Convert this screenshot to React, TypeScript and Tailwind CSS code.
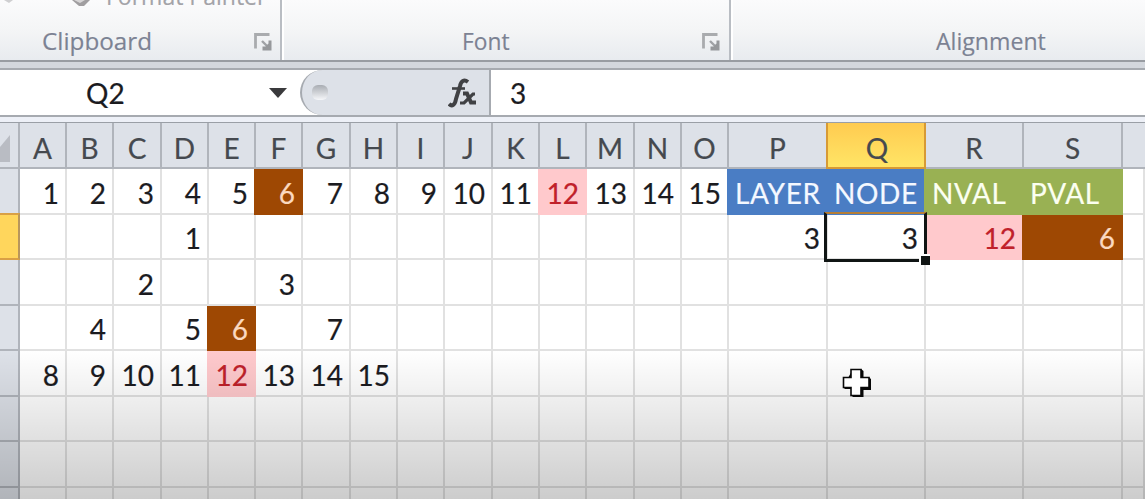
import React from 'react';
import { clsx } from 'clsx';

type Tone = 'brown' | 'pink' | 'blue' | 'green';

interface CellData {
  value: string;
  tone?: Tone;
}

const columns = 'ABCDEFGHIJKLMNOPQRS'.split('');

const gridCols =
  'grid grid-cols-[20px_47px_47px_48px_47px_47px_47px_48px_47px_47px_48px_47px_47px_48px_47px_47px_99px_98px_98px_99px_22px]';

const rowHeights = ['h-[46px]', 'h-[45px]', 'h-[46px]', 'h-[45px]', 'h-[46px]', 'h-[45px]', 'h-[46px]', 'h-[46px]'];

const tones: Record<Tone, string> = {
  brown: 'bg-[#9e4803] text-[#fbd9c0] border-[#9e4803]',
  pink: 'bg-[#ffc9cc] text-[#c0212a] border-[#ffc9cc]',
  blue: 'bg-[#4a7dc4] text-[#f4f8ff] border-[#4a7dc4]',
  green: 'bg-[#99b153] text-[#fbfff0] border-[#99b153]',
};

const rows: Record<string, CellData>[] = [
  {
    A: { value: '1' }, B: { value: '2' }, C: { value: '3' }, D: { value: '4' }, E: { value: '5' },
    F: { value: '6', tone: 'brown' }, G: { value: '7' }, H: { value: '8' }, I: { value: '9' },
    J: { value: '10' }, K: { value: '11' }, L: { value: '12', tone: 'pink' }, M: { value: '13' },
    N: { value: '14' }, O: { value: '15' },
    P: { value: 'LAYER', tone: 'blue' }, Q: { value: 'NODE', tone: 'blue' },
    R: { value: 'NVAL', tone: 'green' }, S: { value: 'PVAL', tone: 'green' },
  },
  {
    D: { value: '1' }, P: { value: '3' }, Q: { value: '3' },
    R: { value: '12', tone: 'pink' }, S: { value: '6', tone: 'brown' },
  },
  { C: { value: '2' }, F: { value: '3' } },
  { B: { value: '4' }, D: { value: '5' }, E: { value: '6', tone: 'brown' }, G: { value: '7' } },
  {
    A: { value: '8' }, B: { value: '9' }, C: { value: '10' }, D: { value: '11' },
    E: { value: '12', tone: 'pink' }, F: { value: '13' }, G: { value: '14' }, H: { value: '15' },
  },
  {},
  {},
  {},
];

const LauncherIcon = () => (
  <svg width="18" height="18" viewBox="0 0 18 18" fill="none" className="shrink-0">
    <path d="M1.5 15.5V1.5H15.5" stroke="#a9abae" strokeWidth="2.8" />
    <path d="M8 8l5 5" stroke="#a0a2a5" strokeWidth="2.4" />
    <path d="M17.5 7.5v10H8.500v-4h3l3-3v-3z" fill="#96989b" />
  </svg>
);

const Ribbon = () => (
  <div className="flex h-[60px] overflow-hidden bg-linear-to-b from-[#fbfbfc] via-[#f4f5f6] to-[#e8ebef] font-['Open_Sans',sans-serif] text-[23px] text-[#7c8293] [-webkit-text-stroke:0.15px_currentColor]">
    <div className="relative w-[282px] border-r-2 border-[#b9bdc3] pt-[26px]">
      <svg width="110" height="8" className="absolute left-0 top-0">
        <path d="M4 0h9L9 3z" fill="#cfcfd1" />
        <path d="M72 0h18l-6 6h-5z" fill="#a09ea0" />
        <path d="M74 0h11l-5 3z" fill="#d7d5d6" />
      </svg>
      <span className="absolute left-[106px] top-[-19px] origin-left whitespace-nowrap leading-[30px] text-[#a3a3a8]">Format Painter</span>
      <div className="ml-[42px] w-fit origin-left scale-x-[1.055] leading-[30px]">Clipboard</div>
      <div className="absolute left-[254px] top-[33px]"><LauncherIcon /></div>
    </div>
    <div className="relative w-[449px] border-x-2 border-l-white border-r-[#b9bdc3] pt-[26px]">
      <div className="ml-[178px] w-fit origin-left scale-x-[0.99] leading-[30px]">Font</div>
      <div className="absolute left-[418px] top-[33px]"><LauncherIcon /></div>
    </div>
    <div className="grow border-l-2 border-white pt-[26px]">
      <div className="ml-[203px] w-fit origin-left scale-x-[1.005] leading-[30px]">Alignment</div>
    </div>
  </div>
);

const FormulaBar = () => (
  <div className="flex h-[49px] border-y-2 border-[#a6aab0] bg-white text-[28px] leading-[46px] text-[#1b1b1f]">
    <div className="flex w-[300px] items-center">
      <span className="ml-[86px] w-[183px]">Q2</span>
      <svg width="18" height="10" viewBox="0 0 18 10">
        <path d="M0 0h18L9 10z" fill="#3a3a3c" />
      </svg>
    </div>
    <div className="flex w-[191px] items-center rounded-l-[24px] border-l-2 border-r-2 border-[#a6aab0] bg-[#dde1e8]">
      <div className="ml-[10px] h-[15px] w-[16px] rounded-[6px] bg-linear-to-b from-[#a9adb3] to-[#f6f7fa]" />
      <svg width="30" height="30" viewBox="0 0 30 30" className="ml-[120px]" fill="none" stroke="#404144">
        <path d="M1 26c3 3 6 1 7-5l4-13c1-5 4-7 8-4" strokeWidth="4" />
        <path d="M4 10.500h13" strokeWidth="2.600" />
        <path d="M15 15.500h4l4 9h5" strokeWidth="4" />
        <path d="M27 16h-2L16 25h-4" strokeWidth="3.200" />
      </svg>
    </div>
    <div className="grow pl-[19px]">3</div>
  </div>
);

const ColumnHeaders = () => (
  <div className={clsx(gridCols, 'h-[46px] bg-[#dde1e8] text-[28px] leading-none text-[#45494f]')}>
    <div className="flex items-start border-b-2 border-r-2 border-[#b0b4bb] pt-[12px]">
      <svg width="10" height="27" viewBox="0 0 10 27">
        <path d="M10 0v27H0V12z" fill="#b9bcc3" />
      </svg>
    </div>
    {columns.map((name) => (
      <div
        key={name}
        className={clsx(
          'flex items-center justify-center border-b-2 border-r-2 pt-[5px]',
          name === 'Q'
            ? '-ml-[2px] border-x-2 border-[#d79a35] bg-linear-to-b from-[#ffcb50] to-[#ffe566] pl-[2px]'
            : 'border-[#b0b4bb]'
        )}
      >
        {name}
      </div>
    ))}
    <div className="border-b-2 border-[#b0b4bb]" />
  </div>
);

const Cell: React.FC<{ cell?: CellData }> = ({ cell }) => {
  const isLabel = cell ? /[A-Z]/.test(cell.value) : false;
  return (
    <div
      className={clsx(
        'flex items-center whitespace-nowrap border-b-2 border-r-2 pt-[3px] text-[28px] leading-none',
        isLabel ? 'justify-start pl-[8px] tracking-[0.6px]' : 'justify-end pr-[6px]',
        cell?.tone ? clsx(tones[cell.tone], '-ml-[2px]') : 'border-[#e1e1e1] text-[#1b1b1f]'
      )}
    >
      {cell?.value}
    </div>
  );
};

const Selection = () => (
  <div className="pointer-events-none absolute left-[824px] top-[43px] h-[50px] w-[103px] border-x-[3px] border-b-[3px] border-t-2 border-[#101514] border-t-[#b67e35]">
    <div className="absolute -bottom-[6px] -right-[6px] h-[11px] w-[11px] border-l-2 border-t-2 border-white bg-[#101514]" />
  </div>
);

const CrossCursor = () => (
  <svg width="30" height="30" viewBox="0 0 30 30" className="absolute left-[842px] top-[199px]">
    <path d="M11 1h8l2.500 2v6h5l2.500 2v11h-7.500v7H11l-2-2v-6H3l-2-2z" fill="#080808" />
    <path d="M9 1.500h10v8h8v10h-8v8H9v-8H1.500v-10H9z" fill="#fff" stroke="#080808" strokeWidth="1.600" />
  </svg>
);

const Sheet = () => (
  <div className="relative h-[330px] overflow-hidden bg-white">
    {rows.map((row, i) => (
      <div key={i} className={clsx(gridCols, rowHeights[i])}>
        <div
          className={clsx(
            'border-b-2 border-r-2',
            i === 1 ? '-mt-[2px] border-t-2 border-[#d9a045] border-r-[#b8965c] bg-[#ffd65c]' : 'border-[#b0b4bb] bg-[#dde1e8]'
          )}
        />
        {columns.map((name) => (
          <Cell key={name} cell={row[name]} />
        ))}
        <Cell />
      </div>
    ))}
    <div className="pointer-events-none absolute inset-x-0 bottom-0 h-[149px] bg-linear-to-b from-black/0 via-black/10 to-black/20" />
    <Selection />
    <CrossCursor />
  </div>
);

export default function App() {
  return (
    <div className="h-[499px] w-[1145px] overflow-hidden bg-[#d3d7dd] font-[Lato,sans-serif] [-webkit-text-stroke:0.2px_currentColor]">
      <Ribbon />
      <div className="h-2 border-t-2 border-[#989ca2] bg-[#d3d7dd]" />
      <FormulaBar />
      <div className="h-[7px] border-b-2 border-[#9a9fa6] bg-[#edf0f7]" />
      <div className="-mt-px">
        <ColumnHeaders />
        <Sheet />
      </div>
    </div>
  );
}
